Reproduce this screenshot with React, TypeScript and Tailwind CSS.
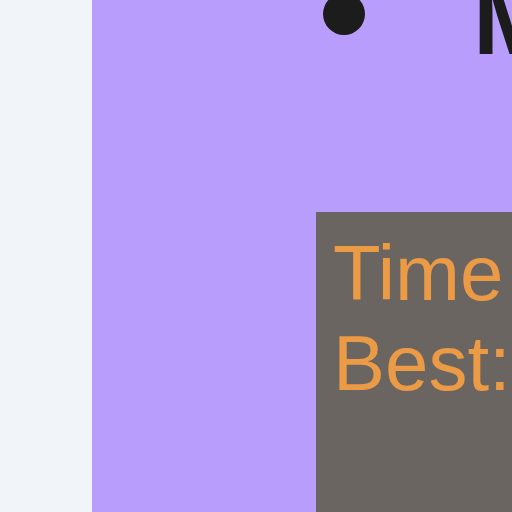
export default function App() {
  return (
    <div className="flex h-[512px] w-[512px] overflow-hidden bg-[#f1f5f9] pl-[92px] font-['Liberation_Sans',Arial,sans-serif]">
      <main className="flex min-w-0 flex-1 flex-col overflow-hidden bg-[#b99dfd]">
        <header className="-mt-[31px] flex h-[100px] shrink-0 items-start whitespace-nowrap pl-[231px] text-[#1c1c1c]">
          <span className="mt-[24px] h-[42px] w-[42px] shrink-0 rounded-full bg-[#1c1c1c]" />
          <h1 className="ml-[108px] text-[100px] font-bold leading-[100px]">Memory</h1>
        </header>
        <section className="ml-[224px] mt-[143px] w-[420px] flex-1 shrink-0 whitespace-nowrap bg-[#6b6561] pl-[17px] pt-[16px] text-[78px] leading-[90px] text-[#eb9a45]">
          <p>Time left</p>
          <p>Best: --</p>
        </section>
      </main>
    </div>
  );
}
